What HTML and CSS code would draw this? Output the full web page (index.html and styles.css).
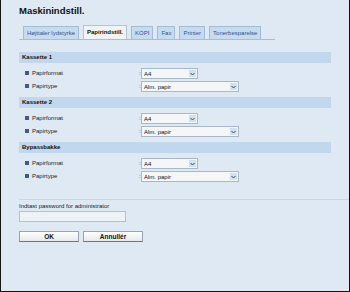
FILE: index.html
```html
<!DOCTYPE html>
<html lang="da">
<head>
<meta charset="utf-8">
<title>Maskinindstill.</title>
<link rel="stylesheet" href="styles.css">
</head>
<body>
<div class="page">
  <h1 class="title">Maskinindstill.</h1>
  <div class="tabs">
    <span class="tab">Højttaler lydstyrke</span>
    <span class="tab active">Papirindstill.</span>
    <span class="tab">KOPI</span>
    <span class="tab">Fax</span>
    <span class="tab">Printer</span>
    <span class="tab">Tonerbesparelse</span>
  </div>

  <div class="sec-head first">Kassette 1</div>
  <div class="sec-body">
    <div class="row"><span class="bullet"></span><span class="label">Papirformat</span><span class="colon">:</span>
      <div class="sel"><span class="val">A4</span><span class="arr"><svg width="5" height="4" viewBox="0 0 5 4"><path d="M0.5 1 L2.5 3 L4.5 1" fill="none" stroke="#2f4b78" stroke-width="1"/></svg></span></div></div>
    <div class="row"><span class="bullet"></span><span class="label">Papirtype</span><span class="colon">:</span>
      <div class="sel wide"><span class="val">Alm. papir</span><span class="arr"><svg width="5" height="4" viewBox="0 0 5 4"><path d="M0.5 1 L2.5 3 L4.5 1" fill="none" stroke="#2f4b78" stroke-width="1"/></svg></span></div></div>
  </div>

  <div class="sec-head">Kassette 2</div>
  <div class="sec-body">
    <div class="row"><span class="bullet"></span><span class="label">Papirformat</span><span class="colon">:</span>
      <div class="sel"><span class="val">A4</span><span class="arr"><svg width="5" height="4" viewBox="0 0 5 4"><path d="M0.5 1 L2.5 3 L4.5 1" fill="none" stroke="#2f4b78" stroke-width="1"/></svg></span></div></div>
    <div class="row"><span class="bullet"></span><span class="label">Papirtype</span><span class="colon">:</span>
      <div class="sel wide"><span class="val">Alm. papir</span><span class="arr"><svg width="5" height="4" viewBox="0 0 5 4"><path d="M0.5 1 L2.5 3 L4.5 1" fill="none" stroke="#2f4b78" stroke-width="1"/></svg></span></div></div>
  </div>

  <div class="sec-head">Bypassbakke</div>
  <div class="sec-body">
    <div class="row"><span class="bullet"></span><span class="label">Papirformat</span><span class="colon">:</span>
      <div class="sel"><span class="val">A4</span><span class="arr"><svg width="5" height="4" viewBox="0 0 5 4"><path d="M0.5 1 L2.5 3 L4.5 1" fill="none" stroke="#2f4b78" stroke-width="1"/></svg></span></div></div>
    <div class="row"><span class="bullet"></span><span class="label">Papirtype</span><span class="colon">:</span>
      <div class="sel wide"><span class="val">Alm. papir</span><span class="arr"><svg width="5" height="4" viewBox="0 0 5 4"><path d="M0.5 1 L2.5 3 L4.5 1" fill="none" stroke="#2f4b78" stroke-width="1"/></svg></span></div></div>
  </div>

  <div class="sep"></div>
  <div class="pw-label">Indtast password for administrator</div>
  <div class="pw-input"></div>
  <div class="buttons">
    <span class="btn">OK</span>
    <span class="btn">Annullér</span>
  </div>
</div>
</body>
</html>
```

FILE: styles.css
```css
html, body {
  margin: 0;
  padding: 0;
}
body {
  font-family: "Liberation Sans", Arial, sans-serif;
  background: #dfe9f3;
}
.page {
  width: 350px;
  height: 292px;
  box-sizing: border-box;
  border: 1px solid #151515;
  border-top: none;
  background: #dfe9f3;
  padding: 0 18px;
  overflow: hidden;
}
.title {
  margin: 5px 0 0;
  font-size: 9.5px;
  line-height: 12px;
  font-weight: bold;
  color: #111;
}
.tabs {
  display: flex;
  align-items: flex-end;
  margin-top: 8px;
  width: 252px;
  height: 14px;
  padding-left: 4px;
  border-bottom: 1px solid #aabdd1;
}
.tab {
  height: 12px;
  border: 1px solid #a3bcd6;
  border-bottom: none;
  background: #c7dbf0;
  color: #2f5290;
  font-size: 6px;
  line-height: 12px;
  padding: 0 3px;
  margin-right: 4px;
  white-space: nowrap;
}
.tab.active {
  height: 13px;
  line-height: 13px;
  background: #f1f4f7;
  border-color: #b6c3d0;
  color: #111;
  font-weight: bold;
}
.sec-head {
  height: 11px;
  line-height: 11px;
  background: #c0d7ee;
  font-size: 6px;
  font-weight: bold;
  color: #111;
  padding-left: 3px;
}
.sec-head.first {
  margin-top: 12px;
}
.sec-body {
  padding: 5px 0 3px;
}
.row {
  display: flex;
  align-items: flex-start;
  height: 13px;
  font-size: 6px;
  color: #222;
}
.bullet {
  width: 4px;
  height: 4px;
  background: #3d5b8c;
  margin: 3px 3px 0 6px;
}
.label {
  width: 107px;
  line-height: 11px;
}
.colon {
  width: 2px;
  line-height: 11px;
}
.sel {
  display: flex;
  align-items: center;
  justify-content: space-between;
  width: 57px;
  height: 11px;
  box-sizing: border-box;
  border: 1px solid #a9b8c8;
  background: #f4f6f8;
}
.sel.wide {
  width: 98px;
}
.val {
  padding-left: 2px;
  font-size: 6px;
  color: #111;
}
.arr {
  display: flex;
  align-items: center;
  justify-content: center;
  width: 7px;
  height: 7px;
  margin-right: 1px;
  background: #d2e0f1;
}
.sep {
  margin-top: 12px;
  margin-right: -18px;
  height: 1px;
  background: #c9d7e5;
}
.pw-label {
  margin-top: 3px;
  font-size: 6px;
  line-height: 7px;
  color: #222;
}
.pw-input {
  margin-top: 1px;
  width: 107px;
  height: 11px;
  box-sizing: border-box;
  border: 1px solid #b3c0cd;
  background: #edf2f7;
}
.buttons {
  display: flex;
  gap: 4px;
  margin-top: 9px;
}
.btn {
  width: 60px;
  height: 11px;
  box-sizing: border-box;
  border: 1px solid #9aa3ad;
  border-bottom-color: #6d747c;
  background: linear-gradient(#ffffff, #e6e8ea);
  font-size: 6.5px;
  font-weight: bold;
  line-height: 9px;
  text-align: center;
  color: #111;
}
```
